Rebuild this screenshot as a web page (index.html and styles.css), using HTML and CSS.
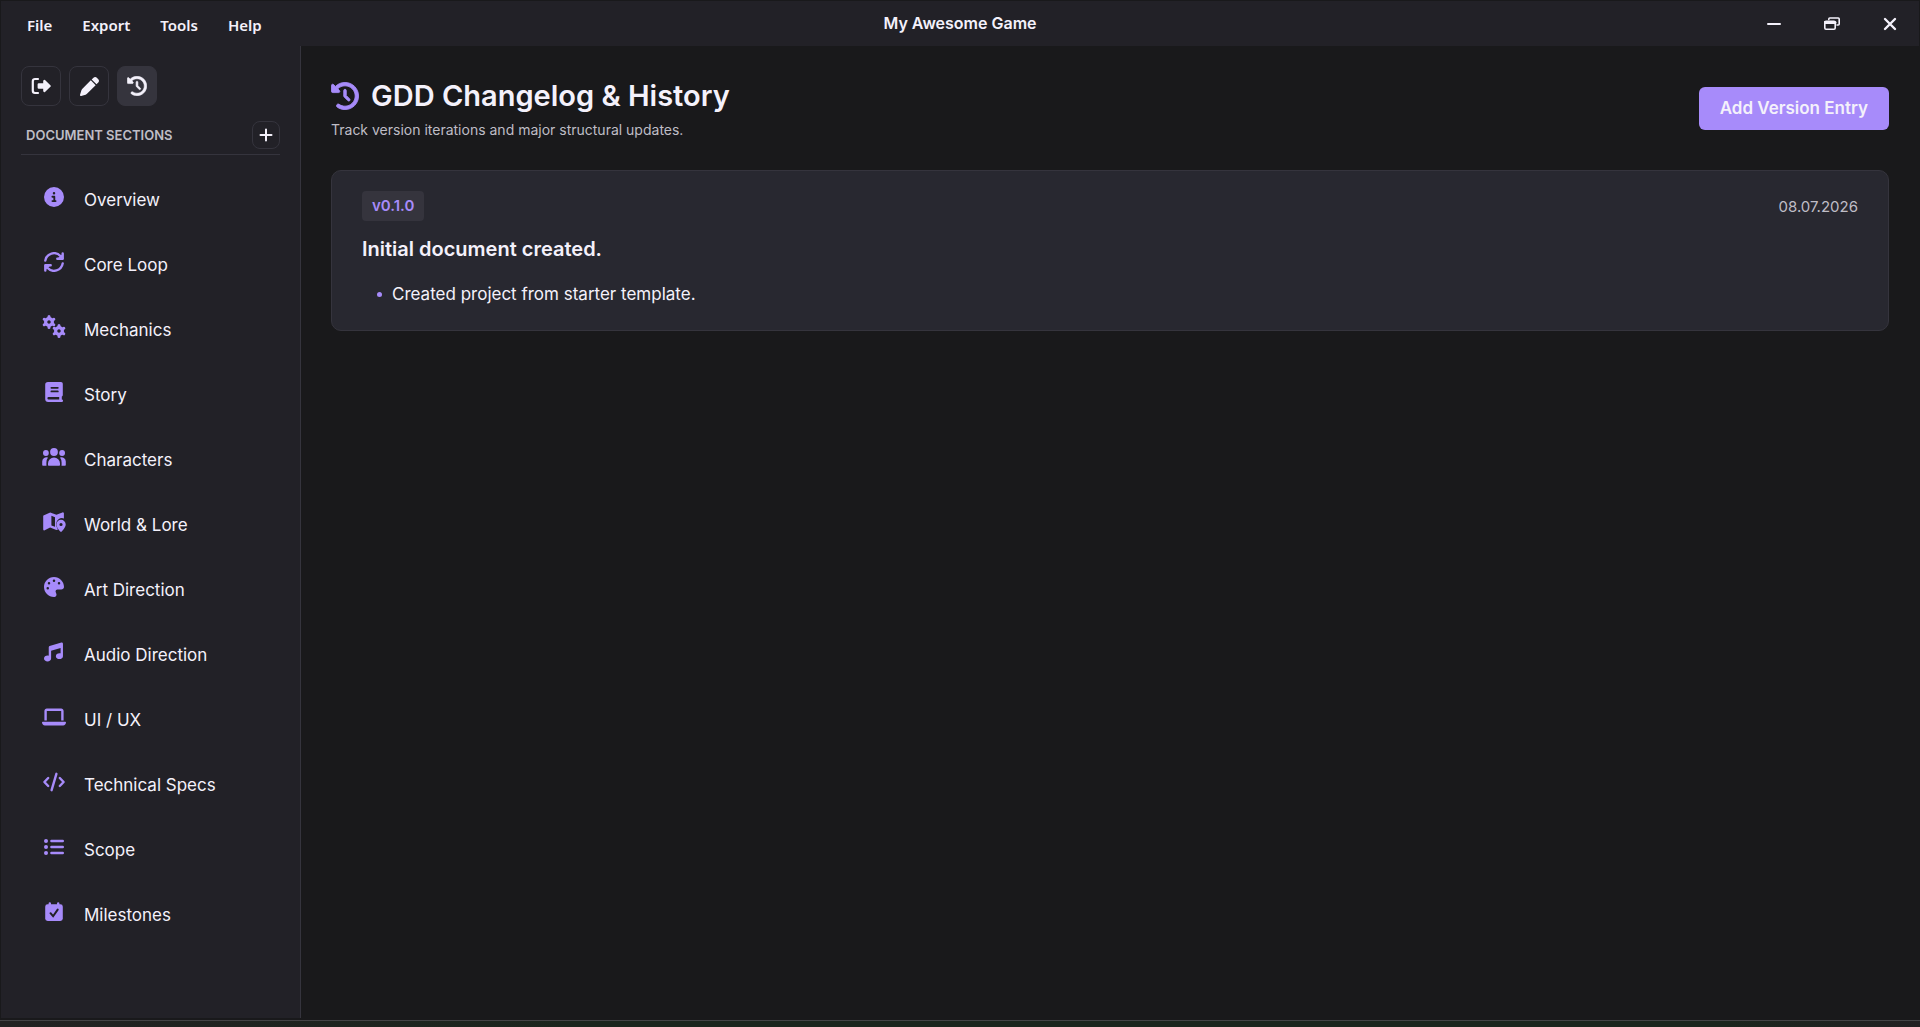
FILE: index.html
```html
<!DOCTYPE html>
<html lang="en">
<head>
  <meta charset="UTF-8">
  <title>My Awesome Game</title>
  <link rel="stylesheet" href="styles.css">
</head>
<body>
  <svg class="defs" aria-hidden="true">
    <symbol id="history" viewBox="-8 -8 528 528">
      <path stroke="currentColor" stroke-width="16" stroke-linejoin="round" d="M75 75L41 41C25.900 25.900 0 36.600 0 57.900L0 168c0 13.300 10.700 24 24 24l110.100 0c21.400 0 32.100-25.900 17-41l-30.800-30.800C155 85.500 203 64 256 64c106 0 192 86 192 192s-86 192-192 192c-40.800 0-78.600-12.700-109.700-34.400c-14.500-10.100-34.400-6.600-44.600 7.900s-6.600 34.400 7.900 44.600C151.200 495 201.700 512 256 512c141.400 0 256-114.600 256-256S397.400 0 256 0C185.300 0 121.300 28.700 75 75zm181 53c-13.300 0-24 10.700-24 24l0 104c0 6.400 2.500 12.500 7 17l72 72c9.400 9.400 24.600 9.400 33.900 0s9.400-24.600 0-33.900l-65-65 0-94.100c0-13.300-10.700-24-24-24z"/>
    </symbol>
    <symbol id="gear" viewBox="-8 -8 16 16">
      <g stroke="currentColor" stroke-width="3" stroke-linecap="round">
        <path d="M0-3.500V-5.500M0 3.500V5.500M3-1.700L4.800-2.700M-3 1.700L-4.800 2.700M3 1.700L4.800 2.700M-3-1.700L-4.800-2.700"/>
      </g>
      <circle class="line" r="3.400" stroke-width="3.200"/>
    </symbol>
  </svg>

  <header class="titlebar">
    <nav class="menu">
      <button type="button">File</button>
      <button type="button">Export</button>
      <button type="button">Tools</button>
      <button type="button">Help</button>
    </nav>
    <div class="app-title">My Awesome Game</div>
    <div class="window-controls">
      <button type="button" aria-label="Minimize">
        <svg width="16" height="16" viewBox="0 0 16 16"><path class="line" d="M2 8h12" stroke-width="2"/></svg>
      </button>
      <button type="button" aria-label="Restore">
        <svg width="16" height="16" viewBox="0 0 16 16">
          <path class="line" d="M4.800 3.500V3a1 1 0 0 1 1-1h8.400a1 1 0 0 1 1 1v5a1 1 0 0 1-1 1H13" stroke-width="1.600"/>
          <rect class="line" x="0.800" y="5.400" width="10.400" height="7.800" rx="1.200" stroke-width="1.600"/>
          <path class="line" d="M1 6.600h10" stroke-width="3"/>
        </svg>
      </button>
      <button type="button" aria-label="Close">
        <svg width="16" height="16" viewBox="0 0 16 16"><path class="line" d="M3 3l10 10M13 3L3 13" stroke-width="2.400"/></svg>
      </button>
    </div>
  </header>

  <div class="layout">
    <aside class="sidebar">
      <div class="tools">
        <button type="button" class="tool" aria-label="Exit project">
          <svg width="20" height="20" viewBox="0 0 20 20">
            <path class="line" d="M7 3H4a2.200 2.200 0 0 0-2.200 2.200v9.600A2.200 2.200 0 0 0 4 17h3" stroke-width="2.200"/>
            <path d="M7.800 7.200h4.400V4.900a1.100 1.100 0 0 1 1.800-.8l5.400 5.100a1.100 1.100 0 0 1 0 1.600L14 15.900a1.100 1.100 0 0 1-1.800-.8v-2.300H7.800a1.200 1.200 0 0 1-1.200-1.200V8.400a1.200 1.200 0 0 1 1.200-1.200z"/>
          </svg>
        </button>
        <button type="button" class="tool" aria-label="Edit">
          <svg width="19" height="19" viewBox="0 0 512 512"><path d="M362.700 19.300L314.300 67.700 444.300 197.700l48.400-48.400c25-25 25-65.500 0-90.500L453.300 19.300c-25-25-65.500-25-90.500 0zm-71 71L58.600 323.500c-10.400 10.400-18 23.300-22.200 37.400L1 481.200C-1.500 489.700 .8 498.800 7 505s15.300 8.500 23.700 6.100l120.300-35.400c14.100-4.200 27-11.800 37.400-22.200L421.700 220.300 291.700 90.300z"/></svg>
        </button>
        <button type="button" class="tool on" aria-label="History">
          <svg width="20" height="20"><use href="#history"/></svg>
        </button>
      </div>

      <div class="sections-head">
        <h2>DOCUMENT SECTIONS</h2>
        <button type="button" class="add" aria-label="Add section">
          <svg width="14" height="14" viewBox="0 0 14 14"><path class="line" d="M7 1.500v11M1.500 7h11" stroke-width="2"/></svg>
        </button>
      </div>

      <nav class="sections">
        <a href="#overview">
          <span class="icon"><svg width="20" height="20" viewBox="0 0 512 512"><path d="M256 512A256 256 0 1 0 256 0a256 256 0 1 0 0 512zM216 336l24 0 0-64-24 0c-13.300 0-24-10.700-24-24s10.700-24 24-24l48 0c13.300 0 24 10.700 24 24l0 88 8 0c13.300 0 24 10.700 24 24s-10.700 24-24 24l-80 0c-13.300 0-24-10.700-24-24s10.700-24 24-24zm40-208a32 32 0 1 1 0 64 32 32 0 1 1 0-64z"/></svg></span>
          Overview
        </a>
        <a href="#core-loop">
          <span class="icon"><svg width="20" height="20" viewBox="0 0 20 20">
            <path class="line" stroke-width="2.400" d="M1.300 8.600A8.800 8.800 0 0 1 16.400 4l1.800 2M18.700 11.400A8.800 8.800 0 0 1 3.600 16l-1.800-2"/>
            <path class="line" stroke-width="2.400" d="M18.700 1.400v5.300h-5.400M1.300 18.600v-5.300h5.400"/>
            <path d="M18.500 2l-5 4.500h5zM1.500 18l5-4.500h-5z"/>
          </svg></span>
          Core Loop
        </a>
        <a href="#mechanics">
          <span class="icon"><svg width="24" height="24" viewBox="0 0 24 24">
            <use href="#gear" x="-1" y="-1" width="16" height="16"/>
            <use href="#gear" x="9" y="8" width="16" height="16"/>
          </svg></span>
          Mechanics
        </a>
        <a href="#story">
          <span class="icon"><svg width="20" height="20" viewBox="0 0 20 20"><path fill-rule="evenodd" d="M4 0h13a1.800 1.800 0 0 1 1.800 1.800V13a1.600 1.600 0 0 1-1 1.500v3a1.250 1.250 0 0 1 0 2.500H4.200A3 3 0 0 1 1.200 17V2.800A2.800 2.800 0 0 1 4 0zM4.600 15a1.200 1.200 0 0 0 0 2.400h10.600V15zM7.400 4.900a.9.9 0 0 0 0 1.800h6.400a.9.9 0 0 0 0-1.800zM7.400 8.500a.9.9 0 0 0 0 1.800h6.400a.9.9 0 0 0 0-1.800z"/></svg></span>
          Story
        </a>
        <a href="#characters">
          <span class="icon"><svg width="24" height="20" viewBox="0 0 24 20">
            <circle cx="12" cy="5" r="3.900"/><circle cx="3.900" cy="6" r="2.900"/><circle cx="20.100" cy="6" r="2.900"/>
            <path d="M6 18v-1.500a6 6 0 0 1 12 0V18a.8.8 0 0 1-.8.800H6.800A.8.8 0 0 1 6 18z"/>
            <path d="M.2 18v-3.500a4.200 4.200 0 0 1 5.800-3.900 8 8 0 0 0-1.600 5v2.400l.1.800H1a.8.8 0 0 1-.8-.8zM23.800 18v-3.500a4.200 4.200 0 0 0-5.800-3.900 8 8 0 0 1 1.600 5v2.400l-.1.800H23a.8.8 0 0 0 .8-.8z"/>
          </svg></span>
          Characters
        </a>
        <a href="#world">
          <span class="icon"><svg width="24" height="20" viewBox="0 0 24 20">
            <path fill-rule="evenodd" d="M2 3.300L8.200 .4l6.200 2.300 6-2.300a1 1 0 0 1 1.500 1v5a6 6 0 0 0-7.900 5.600c0 1.800.9 3.700 2 5.400l-1.600.6-6.300-2.400-5.400 2.700a1 1 0 0 1-1.500-1V4.200c0-.4.300-.8.800-.9zM9.400 3.700v9.700l3.600 1.400V5.200z"/>
            <path fill-rule="evenodd" d="M19 7.800a4.700 4.700 0 0 1 4.700 4.700c0 2.400-2.800 5.800-4 7.100a1 1 0 0 1-1.400 0c-1.200-1.300-4-4.700-4-7.100A4.700 4.700 0 0 1 19 7.800zM19 10.900a1.600 1.600 0 1 0 0 3.200 1.600 1.600 0 0 0 0-3.200z"/>
          </svg></span>
          World &amp; Lore
        </a>
        <a href="#art">
          <span class="icon"><svg width="20" height="20" viewBox="0 0 512 512"><path d="M512 256c0 .9 0 1.800 0 2.700c-.4 36.500-33.600 61.300-70.100 61.300L344 320c-26.500 0-48 21.500-48 48c0 3.400 .4 6.700 1 9.900c2.100 10.200 6.500 20 10.800 29.900c6.100 13.800 12.100 27.500 12.100 42c0 31.800-21.600 60.700-53.400 62c-3.500 .1-7 .2-10.600 .2C114.600 512 0 397.400 0 256S114.600 0 256 0S512 114.600 512 256zM128 288a32 32 0 1 0 -64 0 32 32 0 1 0 64 0zm0-96a32 32 0 1 0 0-64 32 32 0 1 0 0 64zM288 96a32 32 0 1 0 -64 0 32 32 0 1 0 64 0zm96 96a32 32 0 1 0 0-64 32 32 0 1 0 0 64z"/></svg></span>
          Art Direction
        </a>
        <a href="#audio">
          <span class="icon"><svg width="20" height="20" viewBox="0 0 540 512"><path d="M499.100 6.300c8.100 6 12.900 15.600 12.900 25.700l0 72 0 264c0 44.200-43 80-96 80s-96-35.800-96-80s43-80 96-80c11.200 0 22 1.600 32 4.600L448 147 192 223.800 192 432c0 44.200-43 80-96 80s-96-35.800-96-80s43-80 96-80c11.200 0 22 1.600 32 4.600L128 200l0-72c0-14.100 9.300-26.600 22.800-30.700l320-96c9.700-2.900 20.200-1.100 28.300 5z"/></svg></span>
          Audio Direction
        </a>
        <a href="#ui">
          <span class="icon"><svg width="24" height="20" viewBox="0 0 640 512"><path d="M128 32C92.700 32 64 60.700 64 96l0 256 64 0 0-256 384 0 0 256 64 0 0-256c0-35.300-28.700-64-64-64L128 32zM19.200 384C8.600 384 0 392.600 0 403.200C0 445.600 34.400 480 76.800 480l486.400 0c42.400 0 76.800-34.400 76.800-76.800c0-10.600-8.600-19.200-19.200-19.200l-601.600 0z"/></svg></span>
          UI / UX
        </a>
        <a href="#tech">
          <span class="icon"><svg width="24" height="20" viewBox="0 0 24 20">
            <path class="line" stroke-width="2.400" d="M6.200 6L2.400 10l3.800 4M17.800 6l3.800 4-3.800 4M14.400 1.800L9.600 18.200"/>
          </svg></span>
          Technical Specs
        </a>
        <a href="#scope">
          <span class="icon"><svg width="20" height="20" viewBox="0 0 20 20">
            <circle cx="2" cy="4" r="2"/><circle cx="2" cy="10" r="2"/><circle cx="2" cy="16" r="2"/>
            <path class="line" d="M7.400 4h11.400M7.400 10h11.400M7.400 16h11.400" stroke-width="2.400"/>
          </svg></span>
          Scope
        </a>
        <a href="#milestones">
          <span class="icon"><svg width="20" height="20" viewBox="0 0 20 20">
            <path class="line" d="M5.800 1.500V4M14.200 1.500V4" stroke-width="2.400"/>
            <rect x="1.200" y="2.300" width="17.600" height="16.600" rx="2.400"/>
            <path class="check" d="M6.500 11.200l2.600 3 4.600-6.600"/>
          </svg></span>
          Milestones
        </a>
      </nav>
    </aside>

    <main class="content">
      <div class="page-head">
        <div>
          <h1><svg width="28" height="28"><use href="#history"/></svg>GDD Changelog &amp; History</h1>
          <p>Track version iterations and major structural updates.</p>
        </div>
        <button type="button" class="primary">Add Version Entry</button>
      </div>

      <article class="entry">
        <div class="entry-head">
          <span class="version">v0.1.0</span>
          <time datetime="2026-07-08">08.07.2026</time>
        </div>
        <h3>Initial document created.</h3>
        <ul>
          <li>Created project from starter template.</li>
        </ul>
      </article>
    </main>
  </div>
  <div class="desktop-edge"></div>
</body>
</html>
```

FILE: styles.css
```css
* {
  box-sizing: border-box;
}
body {
  margin: 0;
  height: 100vh;
  display: flex;
  flex-direction: column;
  overflow: hidden;
  background: #19191b;
  color: #f4f1fb;
  font-family: Inter, "Liberation Sans", sans-serif;
  font-size: 16px;
}
h1, h2, h3, p, ul {
  margin: 0;
  padding: 0;
}
button {
  margin: 0;
  padding: 0;
  border: 0;
  background: none;
  color: inherit;
  font: inherit;
}
svg {
  display: block;
  fill: currentColor;
}
.line {
  fill: none;
  stroke: currentColor;
  stroke-linecap: round;
  stroke-linejoin: round;
}
.defs {
  position: absolute;
  width: 0;
  height: 0;
}

/* title bar */
.titlebar {
  display: grid;
  grid-template-columns: 1fr auto 1fr;
  align-items: center;
  height: 46px;
  margin: 0 1px;
  border-top: 1px solid #19191b;
  background: #222127;
}
.menu {
  display: flex;
  gap: 30px;
  padding: 3px 0 0 26px;
  font-family: "Noto Sans", "Open Sans", sans-serif;
  font-size: 15px;
  font-weight: 600;
}
.app-title {
  padding-bottom: 2px;
  font-size: 16px;
  font-weight: 600;
}
.window-controls {
  display: flex;
  justify-content: flex-end;
}
.window-controls button {
  display: grid;
  place-items: center;
  width: 58px;
  height: 44px;
}

.layout {
  flex: 1;
  display: flex;
  min-height: 0;
  margin: 0 1px;
}

/* sidebar */
.sidebar {
  width: 300px;
  flex-shrink: 0;
  padding: 20px;
  border-right: 1px solid #35343d;
  background: #222127;
}
.tools {
  display: flex;
  gap: 8px;
}
.tool {
  display: grid;
  place-items: center;
  width: 40px;
  height: 40px;
  border: 1px solid #35343d;
  border-radius: 8px;
}
.tool.on {
  background: #35343d;
}
.sections-head {
  display: flex;
  align-items: center;
  justify-content: space-between;
  margin-top: 15px;
  padding: 0 0 5px 5px;
  border-bottom: 1px solid #35343d;
}
.sections-head h2 {
  color: #bfbdc6;
  font-size: 13px;
  font-weight: 600;
}
.add {
  display: grid;
  place-items: center;
  width: 28px;
  height: 28px;
  border: 1px solid #35343d;
  border-radius: 8px;
}
.sections {
  margin-top: 12px;
}
.sections a {
  display: flex;
  align-items: center;
  gap: 18px;
  height: 65px;
  padding-left: 21px;
  color: inherit;
  font-size: 17px;
  text-decoration: none;
}
.icon {
  display: flex;
  justify-content: center;
  width: 24px;
  padding-bottom: 6px;
  color: #a78bfa;
}
.check {
  fill: none;
  stroke: #222127;
  stroke-width: 2;
  stroke-linecap: round;
}

/* changelog */
.content {
  flex: 1;
  padding: 30px;
}
.page-head {
  display: flex;
  align-items: center;
  justify-content: space-between;
  margin-bottom: 30px;
}
.page-head h1 {
  display: flex;
  align-items: center;
  gap: 12px;
  font-size: 29px;
  font-weight: 600;
  line-height: 40px;
}
.page-head h1 svg {
  color: #a78bfa;
}
.page-head p {
  margin-top: 4px;
  color: #bfbdc6;
  font-size: 14px;
  line-height: 20px;
}
.primary {
  height: 43px;
  padding: 0 21px;
  border-radius: 6px;
  background: #a78bfa;
  font-size: 17px;
  font-weight: 600;
}
.entry {
  padding: 20px 30px 21px;
  border: 1px solid #35343d;
  border-radius: 10px;
  background: #282830;
}
.entry-head {
  display: flex;
  align-items: center;
  justify-content: space-between;
}
.version {
  padding: 0 10px;
  border-radius: 4px;
  background: #35343d;
  color: #a78bfa;
  font-size: 15px;
  font-weight: 600;
  line-height: 30px;
}
.entry time {
  color: #bfbdc6;
  font-size: 15px;
}
.entry h3 {
  margin-top: 15px;
  font-size: 20px;
  font-weight: 600;
  line-height: 26px;
}
.entry ul {
  margin-top: 17px;
  padding-left: 15px;
  list-style: none;
}
.entry li {
  display: flex;
  align-items: center;
  gap: 10px;
  font-size: 17px;
  line-height: 30px;
}
.entry li::before {
  content: "";
  width: 5px;
  height: 5px;
  border-radius: 50%;
  background: #a78bfa;
}

/* strip of desktop under the window */
.desktop-edge {
  height: 9px;
  border-top: 2px solid #19191b;
  background: linear-gradient(#444446 1px, transparent 1px), linear-gradient(90deg, #222222, #1b251d 30%, #1b251d 90%, #222022);
}
```
